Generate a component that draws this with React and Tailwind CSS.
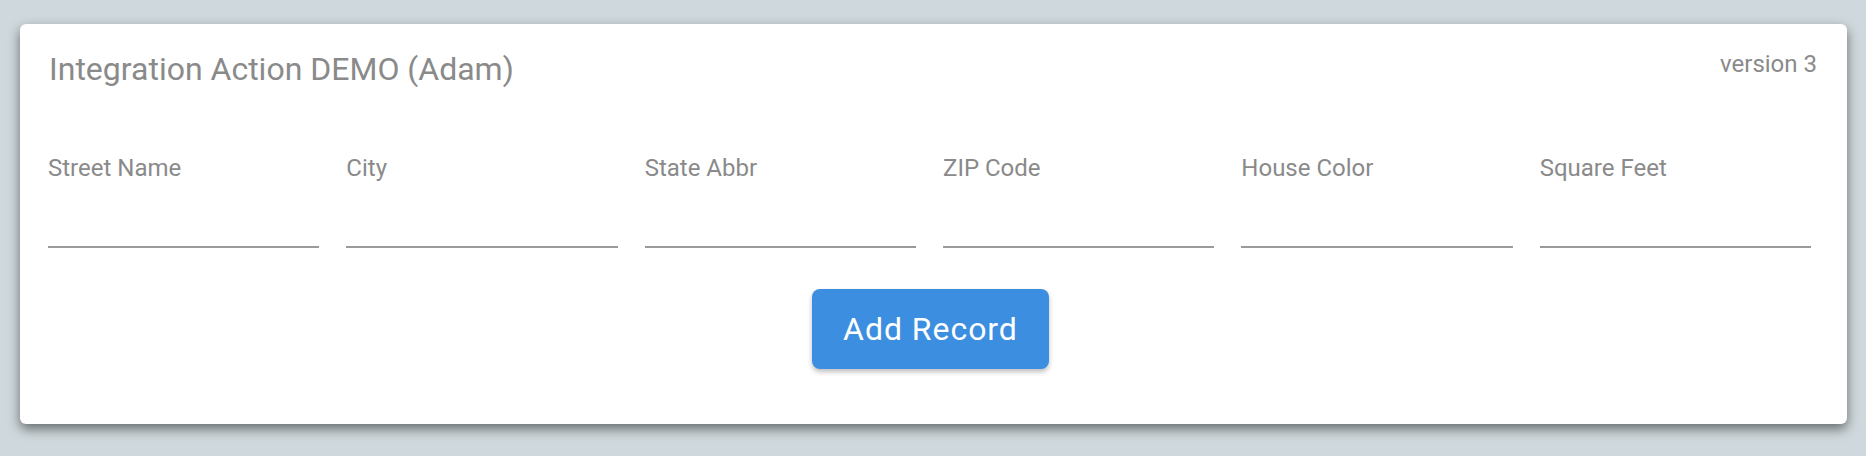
import React from "react";

const fields = ["Street Name", "City", "State Abbr", "ZIP Code", "House Color", "Square Feet"];

const Field = ({ label }) => (
  <div className="flex flex-col">
    <label className="text-[24px] leading-[32px] text-[#8a8a8a]">{label}</label>
    <input className="h-[62px] w-full bg-transparent outline-none" />
    <div className="h-[2px] bg-[#9a9a9a]"></div>
  </div>
);

export default function App() {
  return (
    <div
      className="min-h-[456px] w-full bg-[#cfd8dc] pt-[24px] pl-[20px] pr-[19px] pb-[32px]"
      style={{ fontFamily: "Roboto, 'Liberation Sans', sans-serif" }}
    >
      <div className="bg-white rounded-[6px] shadow-[0_5px_12px_rgba(0,0,0,0.5)] pt-[25px] pl-[28px] pr-[30px] pb-[55px]">
        <div className="flex justify-between items-start">
          <h1 className="text-[32px] leading-[40px] text-[#8a8a8a] ml-[1px]">Integration Action DEMO (Adam)</h1>
          <span className="text-[24px] leading-[28px] mt-[1px] text-[#8a8a8a]">version 3</span>
        </div>

        <div className="grid grid-cols-6 gap-x-[27px] mt-[63px] pr-[6px]">
          {fields.map((f) => (
            <Field key={f} label={f} />
          ))}
        </div>

        <div className="flex justify-center mt-[41px]">
          <button className="h-[80px] w-[237px] rounded-[8px] bg-[#3b8ee0] text-white text-[32px] tracking-[0.03em] shadow-[0_3px_5px_rgba(0,0,0,0.25)] mr-[4px]">
            Add Record
          </button>
        </div>
      </div>
    </div>
  );
}
